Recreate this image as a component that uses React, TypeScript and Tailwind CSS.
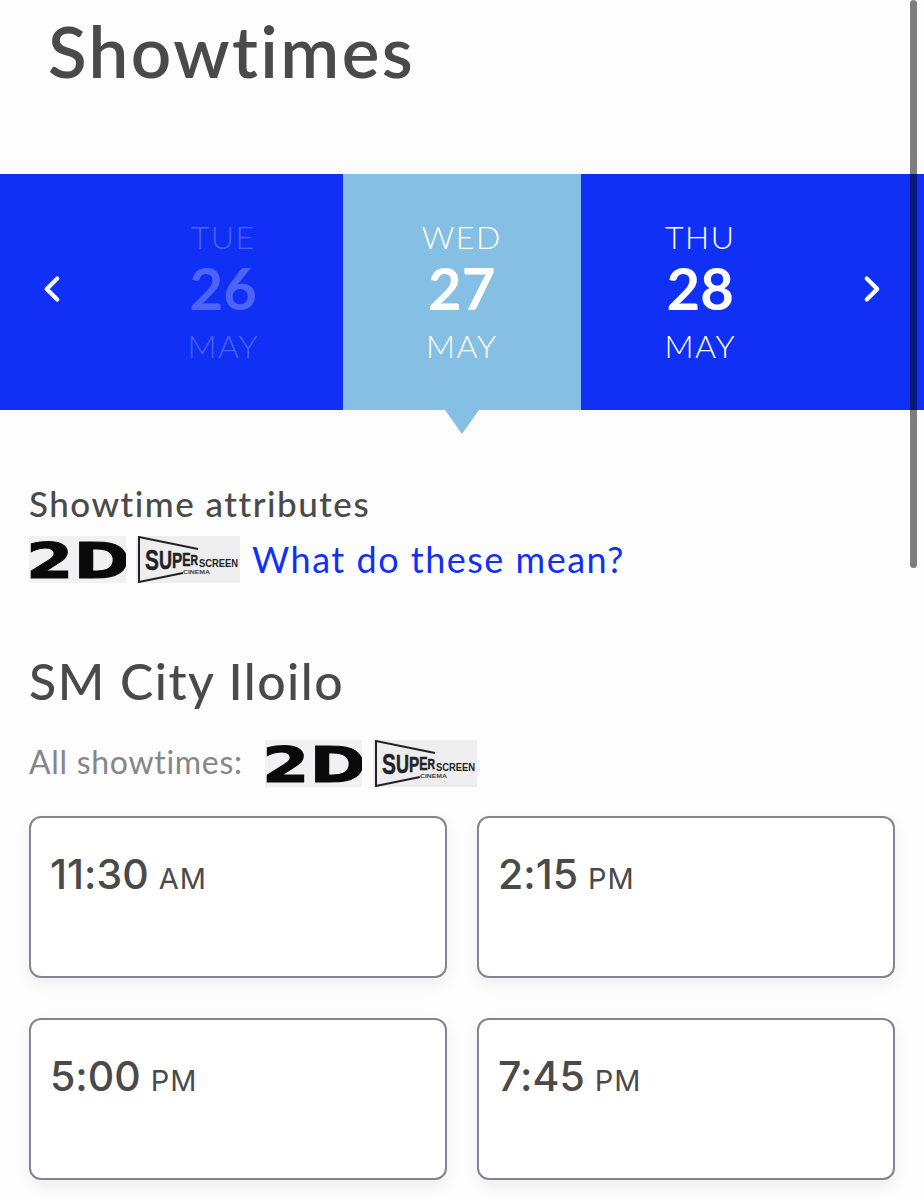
import React from 'react';
import { ChevronLeft, ChevronRight } from 'lucide-react';

const days = [
  { id: 'tue', name: 'TUE', num: '26', month: 'MAY', state: 'disabled' },
  { id: 'wed', name: 'WED', num: '27', month: 'MAY', state: 'active' },
  { id: 'thu', name: 'THU', num: '28', month: 'MAY', state: 'normal' },
];

const times = [
  { id: 1, time: '11:30', period: 'AM' },
  { id: 2, time: '2:15', period: 'PM' },
  { id: 3, time: '5:00', period: 'PM' },
  { id: 4, time: '7:45', period: 'PM' },
];

const Logo2D = ({ className }: { className: string }) => (
  <svg viewBox="0 0 97 47" className={className}>
    <rect width="97" height="47" fill="#f1f1f3" />
    <text
      x="-3"
      y="42"
      textLength="104"
      lengthAdjust="spacingAndGlyphs"
      fontFamily="'DejaVu Sans', sans-serif"
      fontWeight="700"
      fontSize="50"
      fill="#0a0a0a"
      stroke="#0a0a0a"
      strokeWidth="1"
    >
      2D
    </text>
  </svg>
);

const LogoSuper = ({ className }: { className: string }) => (
  <svg viewBox="0 0 104 47" className={className}>
    <rect width="104" height="47" fill="#eeeef0" />
    {/* pennant outline */}
    <path d="M47 37 L3 46 L3 1 L62 13" fill="none" stroke="#222" strokeWidth="2" />
    <text
      x="9"
      y="34"
      textLength="53"
      lengthAdjust="spacingAndGlyphs"
      fontFamily="'Liberation Sans', sans-serif"
      fontWeight="700"
      fill="#222"
      stroke="#222"
      strokeWidth="0.5"
    >
      <tspan fontSize="30">S</tspan>
      <tspan fontSize="26" dy="-1">U</tspan>
      <tspan fontSize="22" dy="-1.5">P</tspan>
      <tspan fontSize="18" dy="-1.5">E</tspan>
      <tspan fontSize="15" dy="-1">R</tspan>
    </text>
    <text x="63" y="31" textLength="39" lengthAdjust="spacingAndGlyphs" fontFamily="'Liberation Sans', sans-serif" fontWeight="700" fontSize="11" fill="#222">
      SCREEN
    </text>
    <text x="47" y="37.5" textLength="27" lengthAdjust="spacingAndGlyphs" fontFamily="'Liberation Sans', sans-serif" fontWeight="700" fontSize="5" fill="#444">
      CINEMA
    </text>
  </svg>
);

export default function App() {
  return (
    <div className="relative w-[924px] h-[1200px] overflow-hidden bg-[#fdfdfd] font-['Lato',sans-serif] text-[#4a4a4a] [font-variant-ligatures:none]">
      <h1 className="pl-[48px] pt-[11px] h-[174px] text-[71px] leading-[80px] font-semibold tracking-[2.4px]">Showtimes</h1>

      {/* date strip */}
      <div className="relative flex h-[236px] bg-[#1130f5] text-white">
        <button className="w-[104px] flex items-center justify-center">
          <ChevronLeft className="w-[42px] h-[42px] -mt-[6px]" strokeWidth={2.4} />
        </button>
        {days.map((day) => (
          <div
            key={day.id}
            className={
              day.state === 'active'
                ? 'relative w-[238.5px] flex flex-col items-center pt-[43px] bg-[#85bfe3]'
                : day.state === 'disabled'
                  ? 'relative w-[238.5px] flex flex-col items-center pt-[43px] text-white/25'
                  : 'relative w-[238.5px] flex flex-col items-center pt-[43px]'
            }
          >
            <span className="text-[32px] leading-[40px] tracking-[1.5px] font-light">{day.name}</span>
            <span className="text-[58px] leading-[62px] font-bold">{day.num}</span>
            <span className="text-[32px] leading-[54px] tracking-[1.5px] font-light">{day.month}</span>
            {day.state === 'active' && (
              <span className="absolute top-full left-1/2 -translate-x-1/2 w-0 h-0 border-x-[17px] border-x-transparent border-t-[24px] border-t-[#85bfe3]" />
            )}
          </div>
        ))}
        <button className="flex-1 flex items-center justify-center">
          <ChevronRight className="w-[42px] h-[42px] -mt-[6px]" strokeWidth={2.4} />
        </button>
      </div>

      {/* attributes */}
      <div className="px-[29px] pt-[72px]">
        <h2 className="text-[35px] leading-[42px] font-medium tracking-[1.5px] whitespace-nowrap">Showtime attributes</h2>
        <div className="flex items-center mt-[12px] h-[47px]">
          <Logo2D className="w-[97px] h-[47px]" />
          <LogoSuper className="w-[104px] h-[47px] ml-[10px]" />
          <a className="ml-[12px] text-[36px] leading-[47px] text-[#1130f5] tracking-[1.5px] whitespace-nowrap">What do these mean?</a>
        </div>

        <h2 className="mt-[68px] text-[50px] leading-[60px] font-medium tracking-[1.5px]">SM City Iloilo</h2>
        <div className="flex items-center mt-[29px] h-[47px]">
          <span className="w-[236px] mb-[4px] text-[32px] text-[#85858c] tracking-[0.7px] whitespace-nowrap">All showtimes:</span>
          <Logo2D className="w-[97px] h-[47px]" />
          <LogoSuper className="w-[104px] h-[47px] ml-[11px]" />
        </div>

        <div className="grid grid-cols-2 gap-x-[30px] gap-y-[40px] mt-[29px] w-[866px]">
          {times.map((t) => (
            <div
              key={t.id}
              className="h-[162px] rounded-[12px] border-2 border-[#85858f] bg-white pl-[19px] pt-[28px] shadow-[0_6px_14px_rgba(60,60,90,0.08)] [font-feature-settings:'calt'_0]"
            >
              <span className="font-['Inter',sans-serif] text-[41px] leading-[56px] font-medium">{t.time}</span>
              <span className="font-['Inter',sans-serif] text-[29px] ml-[10px] tracking-[1px]">{t.period}</span>
            </div>
          ))}
        </div>
      </div>

      {/* scrollbar overlay */}
      <div className="absolute left-[910px] top-0 w-[7px] h-[568px] rounded-full bg-black/50" />
    </div>
  );
}
